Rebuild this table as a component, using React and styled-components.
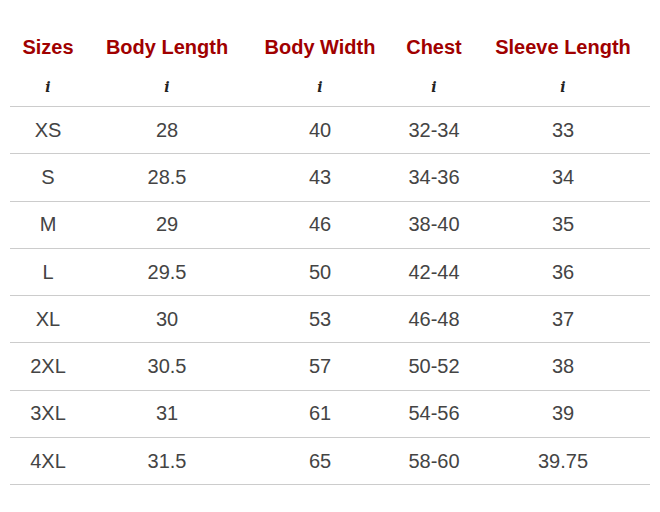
import React from 'react';
import styled, { createGlobalStyle } from 'styled-components';

const GlobalStyle = createGlobalStyle`
  html, body {
    margin: 0;
    padding: 0;
    background: #ffffff;
  }
  body {
    font-family: "Liberation Sans", Arial, sans-serif;
  }
`;

const Page = styled.div`
  width: 660px;
  padding: 26px 10px 0;
  box-sizing: border-box;
`;

const Table = styled.table`
  width: 640px;
  border-collapse: collapse;
  table-layout: fixed;
`;

const HeadCell = styled.th`
  color: #a00000;
  font-size: 20px;
  font-weight: 700;
  text-align: center;
  height: 42px;
  padding: 0;
  vertical-align: middle;
`;

const UnitCell = styled.th`
  font-family: "DejaVu Serif", "Liberation Serif", serif;
  font-style: italic;
  font-weight: 700;
  font-size: 14px;
  color: #222;
  text-align: center;
  height: 38px;
  padding: 0;
  border-bottom: 1px solid #cccccc;
`;

const Cell = styled.td`
  color: #444444;
  font-size: 20px;
  text-align: center;
  height: 46.3px;
  padding: 0;
  border-bottom: 1px solid #cccccc;
`;

const columns = [
  { title: 'Sizes', width: 76 },
  { title: 'Body Length', width: 162 },
  { title: 'Body Width', width: 144 },
  { title: 'Chest', width: 84 },
  { title: 'Sleeve Length', width: 174 },
];

const rows = [
  ['XS', '28', '40', '32-34', '33'],
  ['S', '28.5', '43', '34-36', '34'],
  ['M', '29', '46', '38-40', '35'],
  ['L', '29.5', '50', '42-44', '36'],
  ['XL', '30', '53', '46-48', '37'],
  ['2XL', '30.5', '57', '50-52', '38'],
  ['3XL', '31', '61', '54-56', '39'],
  ['4XL', '31.5', '65', '58-60', '39.75'],
];

export default function App() {
  return (
    <>
      <GlobalStyle />
      <Page>
        <Table>
          <colgroup>
            {columns.map(c => (
              <col key={c.title} style={{ width: c.width }} />
            ))}
          </colgroup>
          <thead>
            <tr>
              {columns.map(c => (
                <HeadCell key={c.title}>{c.title}</HeadCell>
              ))}
            </tr>
            <tr>
              {columns.map(c => (
                <UnitCell key={c.title}>i</UnitCell>
              ))}
            </tr>
          </thead>
          <tbody>
            {rows.map(r => (
              <tr key={r[0]}>
                {r.map((v, i) => (
                  <Cell key={i}>{v}</Cell>
                ))}
              </tr>
            ))}
          </tbody>
        </Table>
      </Page>
    </>
  );
}
